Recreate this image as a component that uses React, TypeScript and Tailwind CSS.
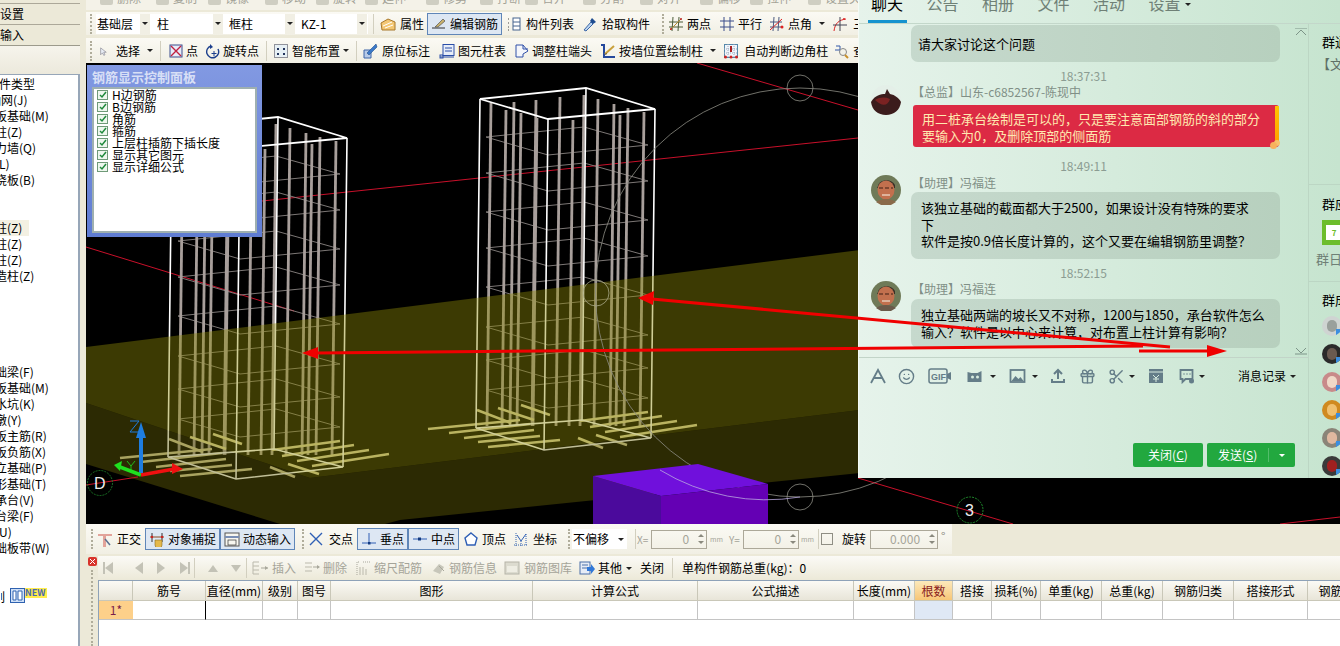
import type { ReactNode } from 'react'
import { Gift, Scissors, Smile } from 'lucide-react'

const Ic = ({ children, w = 16 }: { children: ReactNode; w?: number }) => (
  <svg viewBox="0 0 16 16" width={w} height={16} fill="none" className="shrink-0">
    {children}
  </svg>
)

const icons = {
  attr: <Ic><path d="M1 7 8 3l7 3v8H2z" fill="#f3c774" stroke="#a8782c" /><path d="M3 10l9-4M5 12l8-3" stroke="#fff" /></Ic>,
  edit: <Ic><path d="M1 12h13" stroke="#333" /><path d="M4 11 12 3l2 2-7 6z" fill="#c9b26c" stroke="#555" strokeWidth=".7" /></Ic>,
  list: <Ic><path d="M2 3h2M2 7h2M2 11h2M2 14h2" stroke="#444" strokeDasharray="1 1" /><rect x="7" y="2" width="7" height="12" fill="#fff" stroke="#47648f" /><path d="M7 6h7M7 10h7" stroke="#47648f" /></Ic>,
  pick: <Ic><path d="M2 14 9 6l2 2-7 7z" fill="#bcd4ef" stroke="#3a66a8" /><path d="M10 2l4 4-3 2-3-3z" fill="#1e4d90" /></Ic>,
  two: <Ic><path d="M1 6h14M1 11h14M5 1l-1 14M11 1l-1 14" stroke="#4c5c3a" /><path d="M2 14 13 3" stroke="#b48a30" /><circle cx="3" cy="13" r="1" fill="#b22" /><circle cx="13" cy="3" r="1" fill="#b22" /></Ic>,
  par: <Ic><path d="M1 5h14M1 11h14M5 1v14M11 1v14" stroke="#3b4c8a" /></Ic>,
  ang: <Ic><path d="M1 6h12M1 11h12M5 1l-1 14M10 1 9 15" stroke="#4a5a80" /><path d="M1 14 13 3" stroke="#d22" /><circle cx="13" cy="11" r="1.5" fill="#d22" /></Ic>,
  three: <Ic><path d="M2 15C3 7 7 4 14 3" stroke="#d22" /><path d="M8 1v14M1 9h14" stroke="#445" /><circle cx="12" cy="3" r="1" fill="#d22" /></Ic>,
  sel: <Ic w={10}><path d="M1 3v11l3-3 2 4 2-1-2-4h4z" fill="#e8edf5" stroke="#667" strokeWidth=".8" /></Ic>,
  pt: <Ic><rect x="2" y="2" width="12" height="12" fill="#e7ecf8" stroke="#3a4c8c" /><path d="M3 3l10 10M13 3 3 13" stroke="#c02040" strokeWidth="1.4" /></Ic>,
  rot: <Ic><path d="M6 3a6 6 0 1 0 7 3" stroke="#1c3f8c" strokeWidth="1.4" /><path d="M5 1v5l3-2z" fill="#1c3f8c" /><path d="M9 8v5M6.500 10.500h5" stroke="#1c3f8c" /></Ic>,
  smart: <Ic><rect x="1.500" y="1.500" width="13" height="13" fill="#e7f0f5" stroke="#334" strokeDasharray="1 1" /><path d="M4 5h2v2H4zM10 5h2v2h-2zM4 10h2v2H4zM10 10h2v2h-2z" fill="#22345c" /></Ic>,
  orig: <Ic><path d="M2 7h7v8H2z" fill="#b8cbe8" stroke="#3c64a8" /><path d="M5 10 14 1l1 3-8 8z" fill="#3a78c8" stroke="#24508c" strokeWidth=".6" /></Ic>,
  tbl: <Ic><rect x="1" y="12" width="3" height="3" stroke="#2a4ea8" /><rect x="4" y="1.500" width="11" height="11" fill="#e7edf8" stroke="#2a4ea8" /><path d="M6 5h7M6 8h7M1 14h14" stroke="#2a4ea8" /></Ic>,
  adj: <Ic><path d="M2 2h7l5 6-5 3v3H2z" fill="#f4f6fb" stroke="#3050a8" /><path d="M9 2v4h5" stroke="#3050a8" /></Ic>,
  wall: <Ic><path d="M1 2h3v12h11" stroke="#24489c" strokeWidth="2" /><path d="M5 11 14 3" stroke="#c9a03c" strokeWidth="2" /><path d="M5 12l2-1-1-1z" fill="#333" /></Ic>,
  auto: <Ic><rect x="1.500" y="1.500" width="13" height="13" fill="#f1f4fb" stroke="#58a" /><path d="M5 1v14M11 1v14M1 6h14M1 10h14" stroke="#9ab" strokeDasharray="1 1" /><path d="M8 3v6" stroke="#a22" strokeWidth="2" /><circle cx="2.500" cy="14" r="1.500" fill="#c22" /><circle cx="8" cy="14" r="1.500" fill="#c22" /><circle cx="13.500" cy="14" r="1.500" fill="#c22" /></Ic>,
  query: <Ic><path d="M2 3h4v6" stroke="#3558a8" /><path d="M1 7h5" stroke="#3558a8" /><circle cx="9" cy="9" r="3.500" fill="#f2f2ea" stroke="#888" /><path d="M11 12l3 3" stroke="#c8902c" strokeWidth="2" /></Ic>,
  ortho: <Ic><path d="M1 3h14v2H9v11H6V5H1z" fill="#e2a39a" /><path d="M8 8l5 6" stroke="#5a7090" strokeWidth="1.500" /></Ic>,
  snap: <Ic><path d="M3 2v9M13 2v9" stroke="#333" /><path d="M1 6h14" stroke="#8a4a20" /><circle cx="3" cy="6" r="1.200" fill="#c22" /><circle cx="13" cy="6" r="1.200" fill="#c22" /><path d="M6 9h7v5a3 3 0 0 1-7 0z" fill="#e4b94c" stroke="#8a6a20" strokeWidth=".6" /></Ic>,
  dyn: <Ic><rect x="1" y="2" width="14" height="13" fill="#f7f6ef" stroke="#555" /><path d="M1 6h14" stroke="#7a8fb5" strokeWidth="2" /><rect x="4" y="9" width="8" height="5" stroke="#333" strokeWidth=".7" /></Ic>,
  cross: <Ic><path d="M2 2l12 12M14 2 2 14" stroke="#2f5fb5" strokeWidth="1.400" /></Ic>,
  perp: <Ic><path d="M1 12h14M8 2v10" stroke="#2f5fb5" /><rect x="7" y="11" width="2.500" height="2.500" fill="#123a80" /></Ic>,
  mid: <Ic><path d="M1 8h14" stroke="#2f5fb5" /><rect x="6" y="6.500" width="3" height="3" fill="#123a80" /></Ic>,
  top: <Ic><path d="M8 2l6 5-2 7H4L2 7z" fill="#fff" stroke="#2f5fb5" strokeWidth="1.400" /></Ic>,
  coord: <Ic><path d="M1 14h14M3 2v13" stroke="#3a68b0" strokeDasharray="1 1" /><path d="M4 4l4 6 5-7" stroke="#2f5fb5" /><path d="M8 10v5M13 3v11" stroke="#2f5fb5" strokeDasharray="1 1" /></Ic>,
  ins: <Ic w={18}><path d="M1 2h6M1 6h6M1 10h6M1 14h6M1 2v12" stroke="#bbb9ac" /><path d="M9 8h7" stroke="#a8a79b" /><path d="M13 6l3 2-3 2z" fill="#a8a79b" /></Ic>,
  del: <Ic><path d="M1 3h7M1 7h7M1 11h7" stroke="#bbb9ac" /><path d="M9 7h6" stroke="#a8a79b" /><path d="M13 5l3 2-3 2z" fill="#a8a79b" /></Ic>,
  scale: <Ic><path d="M1 15V2h3M14 2h-7" stroke="#a8a79b" strokeDasharray="1 1" /><path d="M4 15V7M7 15V7M10 15v-6" stroke="#bbb9ac" /></Ic>,
  info: <Ic><path d="M2 11 8 4l5 3-4 7z" fill="#c7c6ba" /><path d="M8 6l5 5" stroke="#a8a79b" /></Ic>,
  lib: <Ic><rect x="1" y="2" width="14" height="12" fill="#dcdbcf" stroke="#b5b4a8" /><rect x="3" y="6" width="10" height="6" fill="#eeede3" /></Ic>,
  other: <Ic><rect x="1" y="2" width="10" height="12" fill="#e6ecf6" stroke="#4a6ea8" /><path d="M3 5h6M3 8h6" stroke="#4a6ea8" /><path d="M8 7h4V4l4 5-4 5v-3H8z" fill="#3178d8" /></Ic>,
}

const Grip = ({ className = '' }: { className?: string }) => (
  <div className={`h-[20px] w-[2px] shrink-0 border-l-2 border-dotted border-[#b0ad9b] ${className}`} />
)
const Sep = ({ className = '' }: { className?: string }) => (
  <div className={`h-[20px] w-px shrink-0 bg-[#d2cfbf] ${className}`} />
)
const Caret = ({ className = '' }: { className?: string }) => (
  <span className={`h-0 w-0 shrink-0 border-x-[3px] border-t-[3px] border-x-transparent border-t-[#222] ${className}`} />
)

function Tool({ icon, label, className = '', gap = 'gap-[3px]' }: { icon?: ReactNode; label: string; className?: string; gap?: string }) {
  return (
    <div className={`flex shrink-0 items-center whitespace-nowrap ${gap} ${className}`}>
      {icon}
      <span>{label}</span>
    </div>
  )
}

function Pressed({ icon, label, className }: { icon: ReactNode; label: string; className: string }) {
  return (
    <div className={`flex h-[22px] shrink-0 items-center gap-[3px] border border-[#5f86b8] bg-[#dde7f3] pl-[3px] whitespace-nowrap ${className}`}>
      {icon}
      <span>{label}</span>
    </div>
  )
}

function Combo({ label, className }: { label: string; className: string }) {
  return (
    <div className={`flex h-[20px] items-center justify-between ${className}`}>
      <span>{label}</span>
      <span className="flex h-[20px] w-[10px] items-center justify-center bg-[#f1efe4]">
        <Caret />
      </span>
    </div>
  )
}

function Spin({ value, className }: { value: string; className: string }) {
  return (
    <div className={`flex h-[19px] shrink-0 items-center justify-end border border-[#aca899] text-[#a5a499] ${className}`}>
      <span>{value}</span>
      <span className="ml-[7px] flex w-[10px] flex-col items-center gap-[4px]">
        <span className="h-0 w-0 border-x-[3px] border-b-[3px] border-x-transparent border-b-[#8a897e]" />
        <span className="h-0 w-0 border-x-[3px] border-t-[3px] border-x-transparent border-t-[#8a897e]" />
      </span>
    </div>
  )
}

const treeRows: [string, string, string][] = [
  ['构件类型', '-ml-[13px]', ''],
  ['轴网(J)', '-ml-[11px]', ''],
  ['筏板基础(M)', '-ml-[17px]', ''],
  ['框柱(Z)', '-ml-[17px]', ''],
  ['剪力墙(Q)', '-ml-[17px]', ''],
  ['梁(L)', '-ml-[17px]', ''],
  ['现浇板(B)', '-ml-[17px]', ''],
  ['', '', ''],
  ['', '', ''],
  ['框柱(Z)', '-ml-[17px]', 'bg-[#f3f0e2] w-[29px]'],
  ['暗柱(Z)', '-ml-[17px]', ''],
  ['端柱(Z)', '-ml-[17px]', ''],
  ['构造柱(Z)', '-ml-[17px]', ''],
  ['', '', ''],
  ['', '', ''],
  ['', '', ''],
  ['', '', ''],
  ['', '', ''],
  ['基础梁(F)', '-ml-[17px]', ''],
  ['筏板基础(M)', '-ml-[17px]', ''],
  ['集水坑(K)', '-ml-[17px]', ''],
  ['柱墩(Y)', '-ml-[17px]', ''],
  ['筏板主筋(R)', '-ml-[17px]', ''],
  ['筏板负筋(X)', '-ml-[17px]', ''],
  ['独立基础(P)', '-ml-[17px]', ''],
  ['条形基础(T)', '-ml-[17px]', ''],
  ['桩承台(V)', '-ml-[17px]', ''],
  ['承台梁(F)', '-ml-[17px]', ''],
  ['桩(U)', '-ml-[17px]', ''],
  ['基础板带(W)', '-ml-[17px]', ''],
]

function Sidebar() {
  return (
    <aside className="flex w-[80px] shrink-0 flex-col overflow-hidden">
      <div className="h-[4px] border-b border-[#aca899] bg-[#ece9d8]" />
      <div className="flex h-[21px] items-center border-b border-[#aca899] bg-[#ece9d8]">设置</div>
      <div className="flex h-[21px] items-center border-b border-[#9c9a8c] bg-[#ece9d8]">输入</div>
      <div className="h-[28px] bg-linear-to-b from-[#f6f4ec] to-[#ece9dc]" />
      <div className="flex-1 border-t border-r-2 border-[#97a6b8] bg-white pt-[1px]">
        {treeRows.map(([text, indent, hl], i) => (
          <div key={i} className={`h-[16px] whitespace-nowrap leading-[16px] ${hl}`}>
            <span className={`block ${indent}`}>{text}</span>
          </div>
        ))}
        <div className="mt-[32px] flex items-start pl-[1px]">
          <span className="block w-[9px] overflow-hidden">
            <span className="-ml-[8px] block">列</span>
          </span>
          <svg viewBox="0 0 15 15" width={15} height={15} className="shrink-0">
            <rect x=".5" y=".5" width="14" height="14" fill="#cfe0f7" stroke="#2f62b0" />
            <path d="M3 3h3v9H3zM8 3h4v9H8z" fill="#fff" stroke="#2f62b0" />
          </svg>
          <span className="h-[10px] w-[22px] bg-[#ffec4d] text-[9px] leading-[10px] font-bold text-[#4a6ab0]">NEW</span>
        </div>
      </div>
    </aside>
  )
}

const topItems: [string, string][] = [
  ['删除', 'ml-[14px] w-[56px]'],
  ['复制', 'w-[52px]'],
  ['镜像', 'w-[57px]'],
  ['移动', 'w-[51px]'],
  ['旋转', 'w-[49px]'],
  ['延伸', 'w-[61px]'],
  ['修剪', 'w-[54px]'],
  ['打断', 'w-[45px]'],
  ['合并', 'w-[58px]'],
  ['分割', 'w-[57px]'],
  ['对齐', 'w-[60px]'],
  ['偏移', 'w-[50px]'],
  ['拉伸', 'w-[58px]'],
  ['设置夹点', 'w-[70px]'],
]

function TopToolbars() {
  return (
    <div className="flex h-[63px] flex-col">
      <div className="flex h-[10px] overflow-hidden bg-[#f4f2e8] text-[#a3a297]">
        {topItems.map(([t, c]) => (
          <div key={t} className={`flex shrink-0 items-start gap-[4px] whitespace-nowrap ${c}`}>
            <span className="h-[5px] w-[13px] shrink-0 rounded-b-[2px] bg-[#cfcec2]" />
            <span className="-mt-[11px]">{t}</span>
          </div>
        ))}
      </div>
      <div className="mt-[2px] flex h-[23px] items-center bg-linear-to-b from-[#fbfaf4] to-[#f1efe4]">
        <Grip className="ml-[4px]" />
        <div className="ml-[4px] flex h-[20px] w-[272px] shrink-0 bg-white">
          <Combo label="基础层" className="w-[58px] pr-[4px] pl-[1px]" />
          <Combo label="柱" className="w-[74px] pr-[5px] pl-[3px]" />
          <Combo label="框柱" className="w-[72px] pr-[5px] pl-[1px]" />
          <Combo label="KZ-1" className="w-[68px] pr-[1px] pl-[1px]" />
        </div>
        <Sep className="ml-[5px]" />
        <Tool icon={icons.attr} label="属性" className="ml-[6px]" gap="gap-[4px]" />
        <Pressed icon={icons.edit} label="编辑钢筋" className="ml-[3px] w-[75px]" />
        <Tool icon={icons.list} label="构件列表" className="ml-[4px]" gap="gap-[4px]" />
        <Tool icon={icons.pick} label="拾取构件" className="ml-[8px]" gap="gap-[4px]" />
        <Grip className="ml-[12px]" />
        <Tool icon={icons.two} label="两点" className="ml-[4px]" />
        <Tool icon={icons.par} label="平行" className="ml-[8px]" />
        <Tool icon={icons.ang} label="点角" className="ml-[7px]" />
        <Caret className="ml-[7px]" />
        <Tool icon={icons.three} label="三点辅轴" className="ml-[7px]" gap="gap-[5px]" />
      </div>
      <div className="mt-[3px] flex h-[25px] items-center bg-linear-to-b from-[#fbfaf4] to-[#f1efe4]">
        <Grip className="ml-[4px]" />
        <Tool icon={icons.sel} label="选择" className="ml-[8px]" gap="gap-[6px]" />
        <Caret className="ml-[7px]" />
        <Sep className="ml-[7px]" />
        <Tool icon={icons.pt} label="点" className="ml-[7px]" gap="gap-[2px]" />
        <Tool icon={icons.rot} label="旋转点" className="ml-[7px]" gap="gap-[2px]" />
        <Sep className="ml-[7px]" />
        <Tool icon={icons.smart} label="智能布置" className="ml-[6px]" gap="gap-[3px]" />
        <Caret className="ml-[3px]" />
        <Sep className="ml-[7px]" />
        <Tool icon={icons.orig} label="原位标注" className="ml-[5px]" gap="gap-[4px]" />
        <Tool icon={icons.tbl} label="图元柱表" className="ml-[9px]" />
        <Tool icon={icons.adj} label="调整柱端头" className="ml-[8px]" gap="gap-[2px]" />
        <Tool icon={icons.wall} label="按墙位置绘制柱" className="ml-[8px]" />
        <Caret className="ml-[7px]" />
        <Tool icon={icons.auto} label="自动判断边角柱" className="ml-[7px]" gap="gap-[5px]" />
        <Tool icon={icons.query} label="查看" className="ml-[6px]" gap="gap-[3px]" />
      </div>
    </div>
  )
}

// rebar cage, page coords of the right hand column: [x, top y]
const bars: [number, number][] = [
  [491, 103], [506, 110], [514, 102], [521, 113], [536, 100], [537, 118], [560, 97],
  [573, 120], [584, 95], [598, 99], [614, 104], [620, 115], [628, 108], [644, 112],
]
const hoops = [137, 173, 212, 248, 287, 327, 360, 390]
const feet = [
  'M428 429 520 420', 'M449 433 530 424', 'M464 438 534 430', 'M478 442 540 436', 'M488 447 560 440',
  'M697 425 620 437', 'M677 421 605 432', 'M662 416 590 427', 'M648 412 580 421',
  'M603 448 578 438', 'M627 445 596 435', 'M477 410 511 423', 'M498 408 534 420', 'M521 405 550 415',
]

function Cage({ className }: { className?: string }) {
  return (
    <g className={className}>
      {hoops.map(y => (
        <path key={y} d={`M486 ${y} 584 ${y - 10} 648 ${y + 8} 548 ${y + 18}Z`} fill="none" stroke="#8a8582" strokeWidth=".9" />
      ))}
      {bars.map(([x, y]) => (
        <path key={x} d={`M${x} ${y} ${x - 4} 426`} stroke="#a89f9b" strokeWidth="2.800" />
      ))}
      {feet.map(d => (
        <path key={d} d={d} stroke="#d8d0a0" strokeWidth="2.600" />
      ))}
      <path d="M480 99 586 88 655 109 548 119Z" fill="none" stroke="#fff" strokeWidth="1.800" />
      <path d="M480 99 476 428M586 88 582 420M655 109 651 438M548 119 544 450" stroke="#fff" strokeWidth="1.600" />
      <path d="M476 428 582 420 651 438 544 450Z" fill="none" stroke="#fff" strokeWidth="1.600" />
    </g>
  )
}

function Scene() {
  return (
    <svg viewBox="86 63 1254 461" width={1254} height={461} className="block bg-black">
      <path d="M262 201 858 138M697 63 858 110M86 247 294 311M1280 524 1340 517" stroke="#c8102a" strokeWidth="1" />
      <Cage />
      <g transform="translate(-308 29)">
        <Cage />
      </g>
      <path d="M86 347 860 250V410L310 478 86 403Z" fill="#8f8a07" fillOpacity=".42" />
      <path d="M86 403 310 478 860 410V473L400 520 385 524H280L86 464Z" fill="#696407" fillOpacity=".42" />
      <path d="M858 478 1013 524M86 485 138 477" stroke="#c8102a" strokeWidth="1" />
      <circle cx="800" cy="292.500" r="204.500" fill="none" stroke="#8d8d84" strokeWidth=".8" />
      <circle cx="800" cy="88" r="13" fill="none" stroke="#8d8d84" strokeWidth=".8" />
      <circle cx="800" cy="497" r="13" fill="none" stroke="#8d8d84" strokeWidth=".8" />
      <circle cx="596" cy="293" r="13" fill="none" stroke="#a8a888" strokeWidth=".8" />
      <path d="M593 476 661 496V524H593Z" fill="#4b0a9c" />
      <path d="M661 496 768 484V524H661Z" fill="#6400b4" />
      <path d="M593 476 698 464 768 484 661 496Z" fill="#7010dc" />
      <path d="M660 470A204.500 204.500 0 0 0 800 497" fill="none" stroke="#b9a8e0" strokeWidth=".8" />
      <circle cx="100" cy="483" r="12.500" fill="none" stroke="#1f8a2c" strokeWidth=".8" strokeDasharray="2 1" />
      <text x="94" y="489" fill="#eee" fontSize="16" fontFamily="Liberation Sans, sans-serif">D</text>
      <circle cx="970" cy="510" r="13" fill="none" stroke="#1f8a2c" strokeWidth="1" strokeDasharray="2 1" />
      <text x="965" y="516" fill="#eee" fontSize="16" fontFamily="Liberation Sans, sans-serif">3</text>
      <path d="M141 474V432" stroke="#1e7de0" strokeWidth="4" />
      <path d="M141 422 146 438H136Z" fill="#1e7de0" />
      <path d="M130 421h9l-9 11h9" fill="none" stroke="#1e7de0" strokeWidth="1" />
      <path d="M141 475 120 467" stroke="#1fe01f" strokeWidth="3.500" />
      <path d="M114 465 122 461 120 471Z" fill="#1fe01f" />
      <path d="M127 461l4 5 4-5M131 466v5" fill="none" stroke="#1fe01f" strokeWidth=".8" />
      <path d="M141 475 174 469" stroke="#f01010" strokeWidth="3.500" />
      <path d="M183 469 172 463V474Z" fill="#f01010" />
    </svg>
  )
}

function ControlPanel() {
  const rows = ['H边钢筋', 'B边钢筋', '角筋', '箍筋', '上层柱插筋下插长度', '显示其它图元', '显示详细公式']
  return (
    <div className="absolute top-[65px] left-[87px] flex h-[172px] w-[175px] flex-col bg-linear-to-b from-[#8299e2] to-[#5f7cd2] px-[5px] pb-[4px]">
      <div className="h-[22px] pt-[4px] text-[13px] leading-[16px] font-bold text-[#d7dff6]">钢筋显示控制面板</div>
      <div className="flex-1 border-2 border-[#9fb0b0] bg-white pl-[3px] text-[12px] leading-[12px]">
        {rows.map(r => (
          <div key={r} className="flex h-[12px] items-center gap-[4px] whitespace-nowrap">
            <span className="flex h-[10px] w-[11px] items-center justify-center border border-[#6f9a78] bg-[#eef7ee]">
              <svg viewBox="0 0 8 8" width={8} height={8}>
                <path d="M1 4l2 2 4-5" fill="none" stroke="#1f8a3c" strokeWidth="1.500" />
              </svg>
            </span>
            <span>{r}</span>
          </div>
        ))}
      </div>
    </div>
  )
}

function SnapBar() {
  return (
    <div className="flex h-[32px] bg-[#ece9d8]">
      <div className="flex h-[30px] w-[866px] items-center bg-linear-to-b from-[#fbfaf4] to-[#f1efe4]">
        <Grip className="ml-[5px]" />
        <Tool icon={icons.ortho} label="正交" className="ml-[4px]" gap="gap-[4px]" />
        <Pressed icon={icons.snap} label="对象捕捉" className="ml-[4px] w-[75px]" />
        <Pressed icon={icons.dyn} label="动态输入" className="w-[75px]" />
        <Grip className="ml-[7px]" />
        <Tool icon={icons.cross} label="交点" className="ml-[4px]" gap="gap-[5px]" />
        <Pressed icon={icons.perp} label="垂点" className="ml-[4px] w-[51px]" />
        <Pressed icon={icons.mid} label="中点" className="w-[51px]" />
        <Tool icon={icons.top} label="顶点" className="ml-[4px]" gap="gap-[3px]" />
        <Tool icon={icons.coord} label="坐标" className="ml-[7px]" gap="gap-[4px]" />
        <Grip className="ml-[11px]" />
        <div className="ml-[2px] flex h-[20px] w-[55px] shrink-0 items-center justify-between bg-white pr-[3px] pl-[1px]">
          <span>不偏移</span>
          <Caret />
        </div>
        <Sep className="ml-[8px]" />
        <span className="ml-[1px] w-[14px] shrink-0 text-[10px] text-[#a5a499]">X=</span>
        <Spin value="0" className="w-[56px]" />
        <span className="ml-[3px] w-[11px] shrink-0 text-[7px] text-[#a5a499]">mm</span>
        <span className="ml-[8px] w-[14px] shrink-0 text-[10px] text-[#a5a499]">Y=</span>
        <Spin value="0" className="w-[56px]" />
        <span className="ml-[2px] w-[11px] shrink-0 text-[7px] text-[#a5a499]">mm</span>
        <Sep className="ml-[6px]" />
        <span className="ml-[2px] h-[12px] w-[12px] shrink-0 border border-[#8f8e84]" />
        <span className="ml-[9px] shrink-0">旋转</span>
        <Spin value="0.000" className="ml-[4px] w-[68px]" />
        <span className="mb-[6px] ml-[3px] shrink-0 text-[#8a897e]">°</span>
      </div>
    </div>
  )
}

const navBtn = 'h-0 w-0 shrink-0 border-y-[6px] border-y-transparent'

function BottomToolbar() {
  return (
    <div className="flex h-[24px] items-center bg-linear-to-b from-[#fbfaf6] to-[#ece9d8] text-[#a5a499]">
      <span className={`ml-[7px] ${navBtn} border-r-[8px] border-r-[#c3c2b6] shadow-[-2px_0_0_#c3c2b6]`} />
      <span className={`ml-[22px] ${navBtn} border-r-[8px] border-r-[#c3c2b6]`} />
      <span className={`ml-[14px] ${navBtn} border-l-[8px] border-l-[#c3c2b6]`} />
      <span className={`ml-[15px] ${navBtn} border-l-[8px] border-l-[#c3c2b6] shadow-[2px_0_0_#c3c2b6]`} />
      <Sep className="ml-[6px]" />
      <span className="ml-[13px] h-0 w-0 shrink-0 border-x-[5px] border-b-[7px] border-x-transparent border-b-[#c3c2b6]" />
      <span className="ml-[13px] h-0 w-0 shrink-0 border-x-[5px] border-t-[7px] border-x-transparent border-t-[#c3c2b6]" />
      <Sep className="ml-[5px]" />
      <Tool icon={icons.ins} label="插入" className="ml-[4px]" />
      <Tool icon={icons.del} label="删除" className="ml-[8px]" />
      <Tool icon={icons.scale} label="缩尺配筋" className="ml-[9px]" gap="gap-[2px]" />
      <Tool icon={icons.info} label="钢筋信息" className="ml-[9px]" gap="gap-[2px]" />
      <Tool icon={icons.lib} label="钢筋图库" className="ml-[7px]" gap="gap-[4px]" />
      <div className="flex shrink-0 items-center whitespace-nowrap text-black">
        <Tool icon={icons.other} label="其他" className="ml-[7px]" />
        <Caret className="ml-[4px]" />
        <span className="ml-[8px]">关闭</span>
        <Sep className="ml-[8px]" />
        <span className="ml-[9px]">单构件钢筋总重(kg)：0</span>
      </div>
    </div>
  )
}

const gridCols = 'grid-cols-[34px_73px_57px_35px_33px_202px_165px_156px_61px_38px_39px_49px_61px_61px_71px_74px_70px]'
const headers = ['', '筋号', '直径(mm)', '级别', '图号', '图形', '计算公式', '公式描述', '长度(mm)', '根数', '搭接', '损耗(%)', '单重(kg)', '总重(kg)', '钢筋归类', '搭接形式', '钢筋类型']

function RebarTable() {
  return (
    <div className="flex-1 border-t border-l border-[#8ea2b8] bg-white">
      <div className={`grid h-[20px] ${gridCols}`}>
        {headers.map((h, i) => (
          <div
            key={i}
            className={`flex items-center justify-center whitespace-nowrap border-r border-b border-[#c9c7b8] ${
              i === 9
                ? 'bg-linear-to-b from-[#fce9bb] to-[#f7c676] text-[#8a1c1c]'
                : 'bg-linear-to-b from-[#fbfaf5] to-[#e8e5d8]'
            }`}
          >
            {h}
          </div>
        ))}
      </div>
      <div className={`grid h-[19px] ${gridCols}`}>
        {headers.map((_, i) => (
          <div
            key={i}
            className={`flex items-center justify-center border-b border-[#c4c4c4] ${
              i === 0 ? 'bg-[#fdd08a] text-[#7a1d4b]' : i === 1 ? 'border-r border-r-black' : 'border-r border-r-[#c4c4c4]'
            } ${i === 9 ? 'bg-[#dfe8f5]' : ''}`}
          >
            {i === 0 ? '1*' : ''}
          </div>
        ))}
      </div>
    </div>
  )
}

const chatIcon = '#647d88'

function ChatTools() {
  return (
    <div className="flex h-[36px] items-center">
      <svg viewBox="0 0 16 16" width={16} height={16} className="ml-[11px] shrink-0"><path d="M1 15 8 2l7 13M4 10h8" fill="none" stroke={chatIcon} strokeWidth="1.800" /></svg>
      <Smile size={17} color={chatIcon} strokeWidth={2} className="ml-[12px] shrink-0" />
      <svg viewBox="0 0 24 16" width={24} height={16} className="ml-[13px] shrink-0">
        <rect x="1" y="1" width="18" height="14" rx="2" fill="none" stroke={chatIcon} strokeWidth="1.500" />
        <path d="M19 6l4-2v8l-4-2z" fill={chatIcon} />
        <text x="3" y="12" fontSize="9" fontWeight="bold" fill={chatIcon} fontFamily="Liberation Sans, sans-serif">GIF</text>
      </svg>
      <svg viewBox="0 0 18 16" width={19} height={16} className="ml-[14px] shrink-0"><path d="M1 4l4 1h6l4-2v11H1z" fill={chatIcon} /><circle cx="6" cy="9" r="1.500" fill="#d8ecdf" /><circle cx="11" cy="9" r="1.500" fill="#d8ecdf" /></svg>
      <Caret className="ml-[5px] border-t-[#7f949c]" />
      <svg viewBox="0 0 16 16" width={17} height={16} className="ml-[13px] shrink-0"><rect x="1" y="2" width="14" height="12" fill="none" stroke={chatIcon} strokeWidth="1.800" /><path d="M2 13l4-5 3 3 2-2 3 4z" fill={chatIcon} /></svg>
      <Caret className="ml-[6px] border-t-[#7f949c]" />
      <svg viewBox="0 0 16 16" width={16} height={16} className="ml-[12px] shrink-0"><path d="M8 11V3M4 6l4-4 4 4" fill="none" stroke={chatIcon} strokeWidth="2" /><path d="M2 11v3h12v-3" fill="none" stroke={chatIcon} strokeWidth="2" /></svg>
      <Gift size={17} color={chatIcon} strokeWidth={2} className="ml-[13px] shrink-0" />
      <Scissors size={17} color={chatIcon} strokeWidth={2} className="ml-[12px] shrink-0" />
      <Caret className="ml-[4px] border-t-[#7f949c]" />
      <svg viewBox="0 0 16 16" width={16} height={16} className="ml-[13px] shrink-0"><rect x="1" y="1" width="14" height="14" fill={chatIcon} /><path d="M1 4h14" stroke="#d8ecdf" /><path d="M5 7l3 3 3-3M8 10v4M5 11h6" fill="none" stroke="#d8ecdf" /></svg>
      <svg viewBox="0 0 16 16" width={17} height={16} className="ml-[14px] shrink-0"><path d="M2 2h12v9H7l-3 3v-3H2z" fill="none" stroke={chatIcon} strokeWidth="1.800" /><path d="M5 6h1M8 6h1M11 6h1" stroke={chatIcon} strokeWidth="1.500" /><circle cx="13" cy="13" r="2.500" fill={chatIcon} /></svg>
      <Caret className="ml-[4px] border-t-[#7f949c]" />
      <span className="ml-[33px] whitespace-nowrap text-black">消息记录</span>
      <Caret className="ml-[4px] border-t-[#7f949c]" />
    </div>
  )
}

function Bubble({ lines, className = '' }: { lines: string[]; className?: string }) {
  return (
    <div className={`relative ml-[52px] w-[369px] rounded-[7px] bg-linear-to-r from-[#c6d9cd] to-[#b7d0be] py-[8px] pl-[10px] text-[13px] leading-[16.500px] ${className}`}>
      {lines.map(l => (
        <div key={l} className="whitespace-nowrap">{l}</div>
      ))}
    </div>
  )
}

const Time = ({ t, className }: { t: string; className: string }) => (
  <div className={`h-[16px] text-center leading-[16px] text-[#8b9c92] ${className}`}>{t}</div>
)

const Face = ({ shirt = '#8a6a4a' }: { shirt?: string }) => (
  <svg viewBox="0 0 30 30" width={30} height={30} className="absolute top-0 left-[12px]">
    <circle cx="15" cy="15" r="15" fill="#6f7a58" />
    <path d="M7 11C8 4 21 3 24 10v3H6z" fill="#3a3028" />
    <ellipse cx="15" cy="15" rx="8.500" ry="9.500" fill="#c2704e" />
    <path d="M8 13h14" stroke="#6b3a28" strokeWidth="1.500" strokeDasharray="4 2" />
    <path d="M11 20h8" stroke="#f0e0d0" strokeWidth="1.200" />
    <path d="M5 27c5-4 15-4 20 0l-5 3H10z" fill={shirt} />
  </svg>
)

function Messages() {
  return (
    <div className="relative h-[334px] overflow-hidden border-b border-[#c2d4c8]">
      <div className="pt-[1px]">
        <Bubble lines={['请大家讨论这个问题']} className="h-[37px] !pt-[11px] !pl-[7px]" />
      </div>
      <Time t="18:37:31" className="mt-[6px]" />
      <div className="relative">
        <svg viewBox="0 0 30 30" width={30} height={30} className="absolute top-[1px] left-[12px]">
          <circle cx="15" cy="15" r="15" fill="#e4efe8" />
          <path d="M0 17C4 10 10 9 14 9l2-5 3 5c5 1 9 4 11 8-1 8-7 13-15 13S1 25 0 17z" fill="#3b1c1c" />
          <path d="M4 15c5-3 10-3 15-1-2 7-8 8-15 1z" fill="#7a2222" />
        </svg>
        <div className="ml-[53px] h-[16px] leading-[16px] whitespace-nowrap text-[#808f86]">【总监】山东-c6852567-陈现中</div>
        <div className="relative mt-[5px] ml-[54px] h-[42px] w-[366px] rounded-[3px] bg-[#dc2a44] pt-[5px] pl-[9px] text-[13px] leading-[17px] whitespace-nowrap text-[#ffe9b0]">
          <div>用二桩承台绘制是可以的，只是要注意面部钢筋的斜的部分</div>
          <div>要输入为0，及删除顶部的侧面筋</div>
          <span className="absolute top-[1px] right-0 h-[39px] w-[4px] bg-linear-to-b from-[#ffc400] to-[#ff9d00]" />
          <span className="absolute right-[-1px] bottom-[1px] h-[6px] w-[6px] rounded-full bg-[#f7c26c]" />
          <span className="absolute right-[2px] bottom-[-2px] h-[7px] w-[7px] rounded-full bg-[#f7b25c]" />
        </div>
      </div>
      <Time t="18:49:11" className="mt-[11px]" />
      <div className="relative mt-[1px]">
        <Face />
        <div className="ml-[53px] h-[16px] leading-[16px] whitespace-nowrap text-[#808f86]">【助理】冯福连</div>
        <Bubble lines={['该独立基础的截面都大于2500，如果设计没有特殊的要求', '下', '软件是按0.9倍长度计算的，这个又要在编辑钢筋里调整？']} className="mt-[1px] h-[67px]" />
      </div>
      <Time t="18:52:15" className="mt-[6px]" />
      <div className="relative">
        <Face shirt="#6a5a4a" />
        <div className="ml-[53px] h-[16px] leading-[16px] whitespace-nowrap text-[#808f86]">【助理】冯福连</div>
        <Bubble lines={['独立基础两端的坡长又不对称，1200与1850，承台软件怎么', '输入？软件是以中心来计算，对布置上柱计算有影响？']} className="mt-[2px] h-[49px]" />
      </div>
      <svg viewBox="0 0 12 8" width={12} height={8} className="absolute top-[4px] right-[1px]"><path d="M0 0h12M1 7l5-5 5 5" fill="none" stroke="#7d9488" /></svg>
      <svg viewBox="0 0 12 8" width={12} height={8} className="absolute right-[1px] bottom-[2px]"><path d="M0 7h12M1 1l5 5 5-5" fill="none" stroke="#7d9488" /></svg>
    </div>
  )
}

const members = [
  ['#cfd4d2', '#9aa09c'],
  ['#2a2a2a', '#6a5a50'],
  ['#c88a8a', '#f0d8c8'],
  ['#d08a20', '#f0c070'],
  ['#8a8478', '#e0b8a0'],
  ['#3a3a3a', '#a02020'],
]

function ChatWindow() {
  return (
    <div className="absolute top-0 left-[858px] flex h-[478px] w-[482px] flex-col border-l border-[#f4faf6] bg-linear-to-r from-[#e6f3eb] to-[#c6e4cf]">
      <div className="relative flex h-[24px] gap-[23.500px] overflow-hidden border-b border-[#c3d7ca] pl-[12px] text-[16px] leading-[24px] text-[#6f8076]">
        <span className="-mt-[9px] text-black">聊天</span>
        <span className="-mt-[9px]">公告</span>
        <span className="-mt-[9px]">相册</span>
        <span className="-mt-[9px]">文件</span>
        <span className="-mt-[9px]">活动</span>
        <span className="-mt-[9px] flex items-start gap-[4px]">设置<Caret className="mt-[12px] border-t-[#7f949c]" /></span>
        <span className="absolute bottom-0 left-[9px] h-[3px] w-[39px] bg-[#1593cf]" />
      </div>
      <div className="flex flex-1">
        <div className="flex w-[449px] shrink-0 flex-col">
          <Messages />
          <ChatTools />
          <div className="mt-[49px] ml-[274px] flex gap-[4px] text-white">
            <div className="flex h-[24px] w-[70px] items-center justify-center rounded-[2px] bg-[#22a83f]">
              <span>关闭(<span className="underline">C</span>)</span>
            </div>
            <div className="flex h-[24px] w-[88px] items-center rounded-[2px] bg-[#22a83f]">
              <span className="w-[61px] pl-[11px] whitespace-nowrap">发送(<span className="underline">S</span>)</span>
              <span className="h-[14px] w-px bg-[#53bd6b]" />
              <Caret className="ml-[10px] border-t-white" />
            </div>
          </div>
        </div>
        <div className="flex flex-1 flex-col border-l border-[#bcd6c4] text-[13px] whitespace-nowrap">
          <div className="h-[161px] border-b border-[#bcd6c4]">
            <div className="mt-[8px] ml-[13px] h-[16px]">群通知</div>
            <div className="mt-[6px] ml-[8px] text-[#5f7066]">【文件</div>
          </div>
          <div className="h-[97px] border-b border-[#bcd6c4]">
            <div className="mt-[9px] ml-[13px] h-[16px]">群应用</div>
            <div className="mt-[10px] ml-[13px] flex h-[25px] w-[30px] items-center bg-[#6cbd2c] pl-[4px]">
              <span className="flex h-[15px] w-[16px] items-center justify-center bg-white text-[8px] font-bold text-[#6cbd2c]">7</span>
            </div>
            <div className="mt-[4px] ml-[7px] text-[#6f8076]">群日历</div>
          </div>
          <div className="mt-[8px] ml-[13px] h-[16px]">群成员</div>
          <div className="mt-[10px] ml-[13px] flex flex-col gap-[8px]">
            {members.map(([a, b]) => (
              <div key={a} className="relative h-[20px] w-[20px] overflow-hidden rounded-full" style={{ background: a }}>
                <span className="absolute top-[4px] left-[5px] h-[12px] w-[10px] rounded-full" style={{ background: b }} />
                <span className="absolute right-[0px] bottom-0 h-[7px] w-[6px] bg-[#3b8ee0]" />
              </div>
            ))}
          </div>
        </div>
      </div>
    </div>
  )
}

function Arrows() {
  return (
    <svg viewBox="0 0 1340 646" width={1340} height={646} className="pointer-events-none absolute top-0 left-0">
      <path d="M652 299 1170 347" stroke="#f00000" strokeWidth="3" />
      <path d="M638 298 654 291 653 305Z" fill="#f00000" />
      <path d="M316 353 1143 346" stroke="#f00000" strokeWidth="3" />
      <path d="M302 353 318 347V359Z" fill="#f00000" />
      <path d="M1139 351H1212" stroke="#f00000" strokeWidth="3" />
      <path d="M1227 351 1207 345V357Z" fill="#f00000" />
    </svg>
  )
}

export default function App() {
  return (
    <div className="relative flex h-[646px] w-[1340px] overflow-hidden bg-[#ece9d8] font-['Noto_Sans_CJK_SC',sans-serif] text-[12px] text-black">
      <Sidebar />
      <div className="ml-[6px] flex w-[1254px] shrink-0 flex-col">
        <TopToolbars />
        <Scene />
        <SnapBar />
        <div className="flex flex-1">
          <div className="flex w-[12px] shrink-0 flex-col items-center">
            <span className="mt-[1px] flex h-[9px] w-[9px] items-center justify-center rounded-[2px] bg-[#d8342c]">
              <svg viewBox="0 0 7 7" width={7} height={7}><path d="M1 1l5 5M6 1 1 6" stroke="#fff" /></svg>
            </span>
            <div className="mt-[4px] w-[2px] flex-1 border-l-2 border-dotted border-[#b0ad9b]" />
          </div>
          <div className="flex w-[1242px] flex-col">
            <BottomToolbar />
            <RebarTable />
          </div>
        </div>
      </div>
      <ControlPanel />
      <ChatWindow />
      <Arrows />
    </div>
  )
}
